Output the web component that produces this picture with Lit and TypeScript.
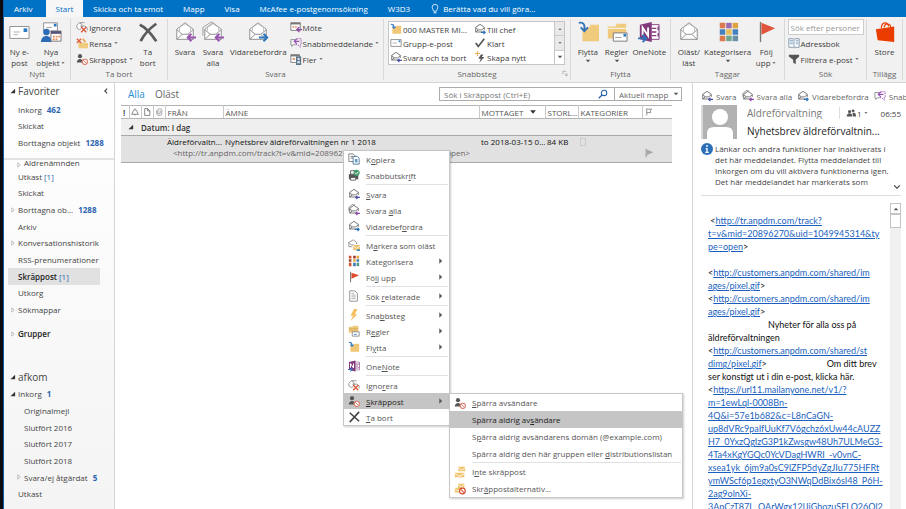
import { LitElement, html, css, svg, nothing } from "lit";
import { customElement } from "lit/decorators.js";
import { classMap } from "lit/directives/class-map.js";

const envelope = svg`<path d="M3 9 12 2l9 7v11H3z" fill="#fff" stroke="#8a8a8a"/><path d="M6 11V7l6-4 6 4v4" fill="#fff" stroke="#a5a5a5" stroke-width=".7"/><path d="M3 9.500l6 5h6l6-5M3 20l6-5.500M21 20l-6-5.500" fill="none" stroke="#8a8a8a"/>`;
const smallEnvelope = svg`<path d="M11 10.500H2V5l5-3.500L12 5v3" fill="#fff" stroke="#666"/><path d="M2 5.500 5 8h4l3-2.500M2 10.500 5 8" fill="none" stroke="#666"/>`;
const block = svg`<circle cx="11" cy="11" r="3.300" fill="#fff" stroke="#dd7a68" stroke-width="1.300"/><path d="m9 9 4 4" stroke="#dd7a68" stroke-width="1.200"/>`;
const person = svg`<circle cx="5" cy="4" r="2.600" fill="#555"/><path d="M1 12c0-6 8-6 8 0z" fill="#555"/>`;

const icons: Record<string, [string, unknown]> = {
  newMail: ["0 0 24 24", svg`<path d="M2 6h21v13H2z" fill="#fff" stroke="#8a8a8a"/><path d="M6 12h7M6 15h5" stroke="#a9a9a9"/><path d="M17 8h4v4h-4z" fill="#2b78c5"/>`],
  newItems: ["0 0 24 24", svg`<path d="M4 2h15v9H4z" fill="#fff" stroke="#8a8a8a"/><path d="M7 7h6" stroke="#999"/><path d="M15 3h3v3h-3z" fill="#2b78c5"/><circle cx="7" cy="12" r="3.500" fill="#2b6cb5"/><path d="M1 23c0-9 12-9 12 0z" fill="#2b6cb5"/><path d="M12 11h11v11H12z" fill="#fff" stroke="#777"/><path d="M12 11h11v3H12z" fill="#557"/><path d="M14 16h2v2h-2zm3 0h2v2h-2zm3 0h2v2h-2zm-6 3h2v2h-2zm3 0h2v2h-2z" fill="#e88b55"/>`],
  ignore: ["0 0 14 14", svg`<path d="M10 2H4L1 5v3l3 2 2-1M4 2l3 2v4M5 6h5l3 2v3" fill="#fff" stroke="#8a8a8a"/><path d="m6 7 6 6m0-6-6 6" stroke="#e05a3c" stroke-width="1.600"/>`],
  clean: ["0 0 14 14", svg`<path d="M3 6h4l1 1h6v6H3z" fill="#f0ca7d"/><path d="m1 2 5 5m0-5L1 7" stroke="#e0613f" stroke-width="1.600"/><path d="M8 2l3 4" stroke="#e7a34f" stroke-width="2"/>`],
  junk: ["0 0 15 15", svg`${person}${block}`],
  deleteBig: ["0 0 24 24", svg`<path d="M3 4C10 7 15 13 21 22M21 3C14 8 8 14 4 22" fill="none" stroke="#5b5b5b" stroke-width="3"/>`],
  reply: ["0 0 24 24", svg`${envelope}<path d="M24 18h-9m4-4-4 4 4 4" fill="none" stroke="#9a55b4" stroke-width="2.200"/>`],
  replyAll: ["0 0 24 24", svg`<path d="M1 16V7l9-6 3 2" fill="none" stroke="#9a9a9a"/>${envelope}<path d="M24 18h-9m4-4-4 4 4 4" fill="none" stroke="#9a55b4" stroke-width="2.200"/>`],
  forward: ["0 0 24 24", svg`${envelope}<path d="M13 18h9m-4-4 4 4-4 4" fill="none" stroke="#2f74bd" stroke-width="2.200"/>`],
  unread: ["0 0 24 24", envelope],
  meeting: ["0 0 14 14", svg`<path d="M1 2h11v9H1z" fill="#fff" stroke="#777"/><path d="M1 2h11v2H1z" fill="#777"/><path d="M3 6h2v2H3zm3 0h2v2H6z" fill="#e28a60"/><path d="M14 10H8m3-3-3 3 3 3" fill="none" stroke="#8d4aa7" stroke-width="1.500"/>`],
  im: ["0 0 14 14", svg`<path d="M6 9H4l-2 2V9H1V3h5" fill="none" stroke="#888"/><path d="M8 2h5v7h-1v3L9 9H6" fill="none" stroke="#9a55b4" stroke-dasharray="2 1"/><path d="M11 5H6m2-3L5 5l3 3" fill="none" stroke="#9a55b4" stroke-width="1.400"/>`],
  more: ["0 0 14 14", svg`<path d="M1 2h10v9H1z" fill="#fff" stroke="#777"/><path d="M1 2h10v2H1z" fill="#777"/><path d="M3 6h3v2H3z" fill="#e28a60"/><path d="M7 4h6v10H7z" fill="#5c7388"/><circle cx="10" cy="7" r="1.500" fill="#cfe0ee"/><path d="M8 12c0-4 4-4 4 0z" fill="#cfe0ee"/>`],
  moveFolder: ["0 0 15 14", svg`<path d="M3 5h4l1-2h6v10H3z" fill="#f0c777"/><path d="M1 1c3 0 4 1 4 4M3 4l2 2 2-2" fill="none" stroke="#2f74bd" stroke-width="1.300"/>`],
  mail: ["0 0 14 14", svg`<path d="M1 3h12v8H1z" fill="#fff" stroke="#888"/><path d="M3 7h5" stroke="#aaa"/><path d="M10 4h2v2h-2z" fill="#2b78c5"/>`],
  replyS: ["0 0 14 14", svg`${smallEnvelope}<path d="M14 11H9m2-2-2 2 2 2" fill="none" stroke="#4b51a5" stroke-width="1.400"/>`],
  replyAllS: ["0 0 14 14", svg`<path d="M1 8V4l5-4 2 1" fill="none" stroke="#888"/>${smallEnvelope}<path d="M14 11H9m2-2-2 2 2 2" fill="none" stroke="#8d4aa7" stroke-width="1.400"/>`],
  forwardS: ["0 0 14 14", svg`${smallEnvelope}<path d="M8 11h5m-2-2 2 2-2 2" fill="none" stroke="#2f74bd" stroke-width="1.400"/>`],
  check: ["0 0 14 14", svg`<path d="m2 7 3 4 7-9" fill="none" stroke="#555" stroke-width="2"/>`],
  newStep: ["0 0 14 14", svg`<path d="M8 4 5 9h3l-2 5 6-7H9l2-3z" fill="#555"/><path d="M4 0v6M1 3h6" stroke="#e7b25a" stroke-width="1.200"/>`],
  move: ["0 0 24 24", svg`<path d="M6 7h7l2-3h9v18H6z" fill="#f0ca7d"/><path d="M2 2c6-1 7 3 6 9M4 7l4 4 4-4" fill="none" stroke="#2f74bd" stroke-width="2"/>`],
  rules: ["0 0 24 24", svg`<path d="M2 6h8l2-3h10v16H2z" fill="#f0ca7d"/><path d="M2 8h20" stroke="#fff"/><path d="M8 13h15v9H8z" fill="#fff" stroke="#777"/><path d="M10 18h7" stroke="#999"/><path d="M19 14h3v3h-3z" fill="#2b78c5"/>`],
  onenote: ["0 0 24 24", svg`<path d="M13 4h10v16H13z" fill="#fff" stroke="#80397b"/><path d="M15 8h5M15 12h5M15 16h5M22 6v4M22 13v4" stroke="#80397b" stroke-width="1.500"/><path d="M2 4l13-3v22L2 20z" fill="#80397b"/><path d="M5 16V7l6 9V7" fill="none" stroke="#fff" stroke-width="2"/><path d="M0 19h8m-3-4 4 4-4 4" fill="none" stroke="#2f74bd" stroke-width="2"/>`],
  categorize: ["0 0 24 24", svg`<path d="M3 2h6v6H3zM3 16h6v6H3z" fill="#db7a4e"/><path d="M10 2h6v6h-6z" fill="#9a6bae"/><path d="M17 2h6v6h-6z" fill="#e0a23f"/><path d="M3 9h6v6H3z" fill="#4581bd"/><path d="M10 9h6v6h-6z" fill="#e8bf55"/><path d="M17 9h6v6h-6z" fill="#4581bd"/><path d="M10 16h6v6h-6z" fill="#6fa68c"/><path d="M17 16h6v6h-6z" fill="#6c8fa8"/>`],
  flagBig: ["0 0 24 24", svg`<path d="M6 1v22" stroke="#777" stroke-width="1.500"/><path d="M7 2l15 6-15 7z" fill="#e0553a"/>`],
  book: ["0 0 14 14", svg`<path d="M1 2h5l1 1 1-1h5v10H8l-1 1-1-1H1zM7 3v9" fill="#fff" stroke="#7d8fa3"/><path d="M2 4h4M2 6h4M2 8h4M9 4h3M9 6h3M9 8h3" stroke="#7da5c9"/>`],
  filter: ["0 0 14 14", svg`<path d="M1 2h12v2L9 8v5l-3-2V8L1 4z" fill="#555"/>`],
  store: ["0 0 24 24", svg`<path d="M2 9l20-3v17L4 21z" fill="#eb3c00"/><path d="M8 8c0-7 7-8 8-2M11 7c1-6 8-4 7 0" fill="none" stroke="#eb3c00" stroke-width="1.300"/>`],
  bulb: ["0 0 14 14", svg`<path d="M5 10c0-2-2-3-2-5.500a4 4 0 0 1 8 0C11 7 9 8 9 10zM5 12h4M6 14h2" fill="none" stroke="#fff" stroke-width="1.100"/>`],
  search: ["0 0 14 14", svg`<circle cx="8.500" cy="5.500" r="3.800" fill="none" stroke="#2a64a8" stroke-width="1.500"/><path d="m6 8-5 5" stroke="#2a64a8" stroke-width="1.800"/>`],
  bell: ["0 0 14 14", svg`<path d="M1 11c3-2 1-8 6-8s3 6 6 8zM6 12h2M7 1v2" fill="none" stroke="#555" stroke-width="1.200"/>`],
  doc: ["0 0 14 14", svg`<path d="M3 1h5l4 4v8H3zM8 1v4h4" fill="none" stroke="#555" stroke-width="1.200"/>`],
  clip: ["0 0 14 14", svg`<path d="M9 4v5c0 2-4 2-4 0V4c0-4 7-4 7 0v5c0 6-9 6-9 0V4" fill="none" stroke="#777" stroke-width="1.200"/>`],
  flagLine: ["0 0 14 14", svg`<path d="M3 1v12M3 2h9L9 5l1 3H3" fill="none" stroke="#666" stroke-width="1.200"/>`],
  flagGray: ["0 0 14 14", svg`<path d="M3 1v12" stroke="#999" stroke-width="1.500"/><path d="M4 2l9 4-9 4z" fill="#a8a8a8"/>`],
  flag: ["0 0 14 14", svg`<path d="M3 1v12" stroke="#777" stroke-width="1.200"/><path d="M4 2l9 3-9 4z" fill="#dc4a2c"/>`],
  copy: ["0 0 14 14", svg`<path d="M1 1h5l2 2v7H1zM3 4h3M3 6h3" fill="#fff" stroke="#777"/><path d="M6 4h5l2 2v7H6z" fill="#fff" stroke="#4b6f95"/><path d="M8 7h3v4H8z" fill="#5d9bcd"/>`],
  print: ["0 0 14 14", svg`<path d="M1 6h11v6H1z" fill="#555"/><path d="M3 2h5v4H3zM3 10h6v3H3z" fill="#fff" stroke="#555"/><circle cx="10" cy="4.500" r="3.600" fill="#3f9a6b"/><path d="m8 4 2 2 2-3" fill="none" stroke="#fff"/>`],
  markUnread: ["0 0 14 14", svg`<path d="M10 6V4L6 1 1 4v5h4M1 4l3 3h3" fill="#fff" stroke="#888"/><path d="M6 7h8v6H6z" fill="#f0c36b"/><path d="m6 8 4 3 4-3" fill="none" stroke="#fff"/><path d="M10 12h4v2h-4z" fill="#4a90c2"/>`],
  catS: ["0 0 14 14", svg`<path d="M1 1h3v3H1zM1 9h3v4H1z" fill="#d0532e"/><path d="M6 1h3v3H6zM1 5h3v3H1z" fill="#9d3e2a"/><path d="M10 1h3v3h-3zM6 5h3v3H6z" fill="#e5a43c"/><path d="M10 5h3v3h-3zM6 9h3v4H6z" fill="#3b79b8"/><path d="M10 9h3v4h-3z" fill="#4c9a83"/>`],
  related: ["0 0 14 14", svg`<path d="M2 1h6l3 3v9H2z" fill="#fff" stroke="#888"/><path d="M4 4h3M4 6h5M4 8h5M4 10h5" stroke="#aaa"/>`],
  bolt: ["0 0 14 14", svg`<path d="M7 0 3 8h3l-3 6 8-8H8l3-6z" fill="#f5bd5b"/>`],
  rulesS: ["0 0 14 14", svg`<path d="M1 2h4l1-1h6v8H1z" fill="#f0ca7d"/><path d="M1 4h11M1 6h11" stroke="#c99b45" stroke-width=".6"/><path d="M5 8h8v5H5z" fill="#fff" stroke="#888"/><path d="M7 11h3" stroke="#2b78c5"/>`],
  deleteS: ["0 0 14 14", svg`<path d="m2 2 11 10M13 1 2 13" fill="none" stroke="#444" stroke-width="1.800"/>`],
  notJunk: ["0 0 14 14", svg`<path d="M5 1h8v5H5zM1 8h11v5H1z" fill="#f0c36b"/><path d="M5 2l4 3 4-3M1 9l5 3 6-3" fill="none" stroke="#fff"/>`],
  junkOptions: ["0 0 15 15", svg`<path d="M5 1h8v5H5zM1 6h9v6H1z" fill="#f0c36b"/><path d="M5 2l4 3 4-3M1 7l4 3 4-3" fill="none" stroke="#fff"/><circle cx="10.500" cy="10" r="3.600" fill="#fff" stroke="#d9482f" stroke-width="1.400"/><path d="m8.500 8 4 4" stroke="#d9482f" stroke-width="1.300"/>`],
  avatar: ["0 0 36 34", svg`<path d="M0 0h36v34H0z" fill="#b1b1b1"/><circle cx="19" cy="12" r="8" fill="#fff"/><path d="M6 34V28q0-6 7-6h12q7 0 7 6v6z" fill="#fff"/><path d="M1 0v34" stroke="#fff"/>`],
  people: ["0 0 14 14", svg`<circle cx="5" cy="5" r="2.200" fill="#555"/><path d="M1 12c0-6 8-6 8 0z" fill="#555"/><circle cx="10" cy="4" r="2" fill="#555"/><path d="M9 7c4-1 5 1 5 5h-4z" fill="#555"/>`],
  info: ["0 0 14 14", svg`<circle cx="7" cy="7" r="7" fill="#2b6fb8"/><path d="M7 6v5M5 11h4M5.500 6.500H7" stroke="#fff" stroke-width="1.600"/><circle cx="7" cy="3.500" r="1.100" fill="#fff"/>`],
  chevron: ["0 0 14 14", svg`<path d="m2 4 5 5 5-5" fill="none" stroke="#444" stroke-width="2"/>`],
  collapse: ["0 0 14 14", svg`<path d="m9 3-4 4 4 4" fill="none" stroke="#444" stroke-width="2"/>`],
  launcher: ["0 0 14 14", svg`<path d="M2 10V3h8M6 7l5 5M12 8v5H7" fill="none" stroke="#888" stroke-width="1.300"/>`],
  open: ["0 0 14 14", svg`<path d="M12 2v10H1z" fill="#333"/>`],
  closed: ["0 0 14 14", svg`<path d="M4 2v10l6-5z" fill="none" stroke="#999" stroke-width="1.300"/>`],
  right: ["0 0 14 14", svg`<path d="M4 2v10l5-5z" fill="#555"/>`],
  down: ["0 0 14 14", svg`<path d="M3 5h8l-4 4z" fill="#555"/>`],
  up: ["0 0 14 14", svg`<path d="M3 9h8L7 5z" fill="#555"/>`],
  sort: ["0 0 14 14", svg`<path d="M2 4h10l-5 6z" fill="#333"/>`],
};

const icon = (name: string, size = "s12") =>
  html`<svg class="icon ${size}" viewBox=${icons[name][0]} aria-hidden="true">${icons[name][1]}</svg>`;

type Folder = { name: string; count?: string; draft?: string; arrow?: "open" | "closed"; level?: number; head?: boolean; strong?: boolean; selected?: boolean };

const favorites: Folder[] = [
  { name: "Inkorg", count: "462" },
  { name: "Skickat" },
  { name: "Borttagna objekt", count: "1288" },
];
const folders: Folder[] = [
  { name: "Äldrenämnden", arrow: "closed", level: 1 },
  { name: "Utkast", draft: "[1]" },
  { name: "Skickat" },
  { name: "Borttagna ob...", count: "1288", arrow: "closed" },
  { name: "Arkiv" },
  { name: "Konversationshistorik", arrow: "closed" },
  { name: "RSS-prenumerationer" },
  { name: "Skräppost", draft: "[1]", strong: true, selected: true },
  { name: "Utkorg" },
  { name: "Sökmappar", arrow: "closed" },
];
const shared: Folder[] = [
  { name: "afkom", arrow: "open", head: true },
  { name: "Inkorg", count: "1", arrow: "open" },
  { name: "Originalmejl", level: 1 },
  { name: "Slutfört 2016", level: 1 },
  { name: "Slutfört 2017", level: 1 },
  { name: "Slutfört 2018", level: 1 },
  { name: "Svara/ej åtgärdat", count: "5", arrow: "closed", level: 1 },
  { name: "Utkast" },
  { name: "Skickat" },
];

/* An underscore marks the access key that follows it; "-" is a divider. */
type Item = { icon?: string; text: string; sub?: boolean; active?: boolean };
const divider: Item = { text: "-" };
const menu: Item[] = [
  { icon: "copy", text: "K_opiera" },
  { icon: "print", text: "Snabbutskr_ift" },
  divider,
  { icon: "replyS", text: "_Svara" },
  { icon: "replyAllS", text: "Svara _alla" },
  { icon: "forwardS", text: "Vidarebef_ordra" },
  divider,
  { icon: "markUnread", text: "M_arkera som oläst" },
  { icon: "catS", text: "Kate_gorisera", sub: true },
  { icon: "flag", text: "Fö_lj upp", sub: true },
  divider,
  { icon: "related", text: "Sök _relaterade", sub: true },
  divider,
  { icon: "bolt", text: "Sna_bbsteg", sub: true },
  { icon: "rulesS", text: "R_egler", sub: true },
  { icon: "moveFolder", text: "Fl_ytta", sub: true },
  divider,
  { icon: "onenote", text: "One_Note" },
  divider,
  { icon: "ignore", text: "Igno_rera" },
  { icon: "junk", text: "_Skräppost", sub: true, active: true },
  { icon: "deleteS", text: "_Ta bort" },
];
const submenu: Item[] = [
  { icon: "junk", text: "_Spärra avsändare" },
  { text: "Spärra aldrig av_sändare", active: true },
  { text: "S_pärra aldrig avsändarens domän (@example.com)" },
  { text: "Spärra aldrig den här gruppen eller _distributionslistan" },
  divider,
  { icon: "notJunk", text: "I_nte skräppost" },
  { icon: "junkOptions", text: "Skr_äppostalternativ..." },
];

/* One entry per line of the message: text before the link, the link, text after it. */
const body: [string, string?, string?][] = [
  [" <", "http://tr.anpdm.com/track?"],
  ["", "t=v&mid=20896270&uid=1049945314&ty"],
  ["", "pe=open", ">"],
  [" "],
  ["<", "http://customers.anpdm.com/shared/im"],
  ["", "ages/pixel.gif", ">"],
  ["<", "http://customers.anpdm.com/shared/im"],
  ["", "ages/pixel.gif", ">"],
  [" ".repeat(26) + "Nyheter för alla oss på"],
  ["äldreförvaltningen"],
  ["<", "http://customers.anpdm.com/shared/st"],
  ["", "dimg/pixel.gif", ">" + " ".repeat(26) + "Om ditt brev"],
  ["ser konstigt ut i din e-post, klicka här."],
  ["<", "https://url11.mailanyone.net/v1/?"],
  ["", "m=1ewLql-0008Bn-"],
  ["", "4Q&i=57e1b682&c=L8nCaGN-"],
  ["", "up8dVRc9paIfUuKf7V6gchz6xUw44cAUZZ"],
  ["", "H7_0YxzQgIzG3P1kZwsgw48Uh7ULMeG3-"],
  ["", "4Ta4xKgYGQc0YcVDagHWRI_-v0vnC-"],
  ["", "xsea1yk_6jm9a0sC9lZFP5dyZgJIu775HFRt"],
  ["", "ymWScf6p1egxtyO3NWqDdBix6sI48_P6H-"],
  ["", "2ag9olnXi-"],
  ["", "3ApCzT87L_QArWgx12lJiGhozuSELO26Ql2"],
];

@customElement("app-root")
export class AppRoot extends LitElement {
  static styles = css`
    :host {
      display: flex;
      position: relative;
      height: 100vh;
      overflow: hidden;
      background: #fff;
      color: #444;
      font: 8px/11px "Open Sans", "Noto Sans", sans-serif;
    }
    * { box-sizing: border-box; }
    button, input, select {
      font: inherit;
      color: inherit;
      background: none;
      border: 0;
      padding: 0;
      margin: 0;
      border-radius: 0;
      outline: 0;
    }
    button { white-space: nowrap; display: flex; align-items: center; }
    .icon { display: block; flex: none; }
    .s6 { width: 6px; height: 6px; }
    .s8 { width: 8px; height: 8px; }
    .s10 { width: 10px; height: 10px; }
    .s12 { width: 12px; height: 12px; }
    .s22 { width: 22px; height: 22px; }
    .edge { flex: none; width: 4px; background: #0b0b10; border-right: 1px solid #0b5fa8; }
    .window { flex: 1; min-width: 0; display: flex; flex-direction: column; }

    .tabs { flex: none; height: 17px; display: flex; background: #0072c6; color: #fff; }
    .tab { padding: 0 10px; }
    .tab:first-child { padding-right: 13px; }
    .tab.current { background: #f6f6f6; color: #0072c6; }
    .tell { gap: 3px; }

    .ribbon { flex: none; display: flex; height: 66px; background: #f1f1f1; border-bottom: 1px solid #d5d5d5; color: #3c3c3c; overflow: hidden; }
    .group { flex: none; display: flex; flex-direction: column; border-right: 1px solid #d8d8d8; margin: 2px 0; }
    .g-new { width: 67px; }
    .g-delete { width: 97px; }
    .g-reply { width: 216px; }
    .g-quick { width: 187px; }
    .g-move { width: 100px; }
    .g-tags { width: 114px; }
    .g-find { width: 82px; }
    .g-store { width: 36px; }
    .tools { flex: 1; min-height: 0; display: flex; justify-content: center; }
    .title { position: relative; flex: none; color: #666; text-align: center; height: 12px; }
    .launch { position: absolute; right: 2px; top: 2px; }
    .big { flex-direction: column; text-align: center; justify-content: flex-start; padding: 2px 3px 0; white-space: pre; }
    .tight { padding: 2px 1px 0; }
    .big span { display: flex; flex-direction: column; align-items: center; padding-top: 3px; }
    .big .row { flex-direction: row; padding: 0; }
    .col { display: flex; flex-direction: column; }
    .small { height: 16px; gap: 1px; }
    .steps { flex: 1; display: flex; margin: 2px 5px 0 4px; height: 44px; background: #fff; border: 1px solid #c6c6c6; }
    .steps .grid { flex: 1; display: grid; grid-template-columns: 84px 1fr; grid-auto-rows: 14px; }
    .steps .small { height: 14px; padding-left: 1px; }
    .spin { display: flex; flex-direction: column; width: 10px; border-left: 1px solid #c6c6c6; }
    .spin button { flex: 1; justify-content: center; background: #e9e9e9; border-bottom: 1px solid #ccc; }
    .spin button:last-child { background: #fff; border: 0; }
    .person { width: 76px; height: 16px; border: 1px solid #ccc; background: #fff; padding: 0 2px; }
    input::placeholder { color: #999; opacity: 1; }

    .main { flex: 1; min-height: 0; display: flex; }
    .nav { flex: none; width: 111px; border-right: 1px solid #d4d4d4; background: linear-gradient(#fff, #f4f4f4); overflow: hidden; }
    .navhead { display: flex; align-items: center; justify-content: space-between; height: 16px; padding-right: 4px; }
    .list { list-style: none; margin: 0; padding: 0; display: grid; grid-auto-rows: 1fr; }
    .fav { height: 50px; margin: 2px 0 7px; }
    .all { height: 160px; grid-template-rows: 8px; border-top: 2px solid #e2e2e2; }
    .all .folder:first-child { align-items: flex-end; overflow: hidden; }
    .groups { height: 17px; margin: 7px 0 27px; }
    .shared { height: 150px; }
    .folder { display: flex; align-items: center; min-height: 0; margin: 0 14px 0 4px; padding: 0; color: #444; white-space: nowrap; }
    .folder .mark { width: 10px; flex: none; display: flex; justify-content: center; }
    .folder.level { margin-left: 10px; }
    .head { font-size: 10px; }
    .navhead .head { margin-right: 0; }
    .strong { font-weight: 600; color: #222; }
    .selected { background: #e1e1e1; }
    .count { color: #2a64b0; font-weight: 700; margin-left: 5px; }
    .draft { color: #2a64b0; margin-left: 2px; font-weight: 400; }

    .mail { flex: 1; min-width: 0; border-right: 1px solid #d4d4d4; padding: 3px 20px 0 6px; }
    .bar { display: flex; align-items: center; height: 16px; margin-right: -10px; }
    .scope { font-size: 10px; padding: 0 5px; color: #666; }
    .scope.on { color: #2a8dd4; padding-left: 7px; }
    .search { margin-left: auto; display: flex; align-items: center; width: 243px; height: 14px; border: 1px solid #ababab; color: #666; }
    .search input { flex: 1; min-width: 0; height: 100%; padding: 0 4px; }
    .search input::placeholder { color: #777; }
    .pick { display: flex; align-items: center; height: 100%; margin-left: 6px; border-left: 1px solid #ababab; padding-right: 1px; }
    .pick select { appearance: none; width: 57px; padding-left: 4px; }
    table { width: 100%; margin-top: 3px; border-collapse: collapse; table-layout: fixed; white-space: nowrap; color: #333; }
    th { height: 13px; padding: 0 2px; font-weight: 400; text-align: left; border-top: 1px solid #b4b4b4; border-bottom: 1px solid #b4b4b4; border-right: 1px solid #c9c9c9; overflow: hidden; color: #555; }
    th:last-child { border-right: 0; }
    .c-mark { width: 8px; } .c-icon { width: 12px; } .c-from { width: 58px; } .c-date { width: 66px; }
    .c-size { width: 33px; } .c-cat { width: 64px; } .c-flag { width: 30px; }
    .tight-th { padding: 0 1px; }
    .sorted { display: flex; align-items: center; justify-content: space-between; padding-right: 6px; }
    td { padding: 0 2px; overflow: hidden; }
    .day td { height: 17px; background: #efefef; font-weight: 600; border-bottom: 1px solid #a8a8a8; }
    .day span { display: flex; align-items: center; gap: 7px; padding-left: 5px; }
    .msg { background: #e1e1e1; color: #111; }
    .msg td { height: 12px; font-weight: 500; border-top: 1px solid #a8a8a8; }
    .msg.low td { height: 15px; font-weight: 400; color: #666; border: 0; border-bottom: 1px solid #a8a8a8; line-height: 10px; vertical-align: top; }
    .msg.low .preview { padding-left: 8px; }
    .box { width: 6px; height: 8px; border: 1px solid #ccc; }

    .read { flex: none; width: 213px; padding: 5px 5px 0 8px; display: flex; flex-direction: column; overflow: hidden; }
    .actions { display: flex; gap: 5px; height: 16px; margin-right: -5px; overflow: hidden; flex: none; color: #666; }
    .actions button { gap: 3px; flex: none; }
    .sender { display: flex; gap: 10px; height: 36px; flex: none; align-items: center; }
    .portrait { width: 36px; height: 34px; }
    .who { flex: 1; min-width: 0; }
    .who div { display: flex; align-items: center; height: 18px; }
    .name { flex: 1; font-size: 10px; color: #777; overflow: hidden; white-space: nowrap; }
    .subject { margin: 0; font-size: 10px; line-height: 18px; font-weight: 500; color: #222; white-space: nowrap; }
    .people { gap: 1px; border-left: 1px solid #ddd; padding-left: 6px; height: 12px; }
    .time { margin-left: 12px; }
    .info { display: flex; gap: 2px; flex: none; height: 53px; border-bottom: 1px solid #ddd; margin-top: 3px; }
    .info p { margin: 0; flex: 1; white-space: pre; }
    .info .chev { align-self: flex-end; padding-bottom: 4px; }
    .content { flex: 1; min-height: 0; display: flex; padding-top: 7px; }
    .text { flex: 1; min-width: 0; margin: 0; padding: 11px 0 0 7px; font: 9px/13px Lato, sans-serif; color: #111; white-space: pre; overflow: hidden; }
    .text a { color: #1a5fc0; }
    .scroll { width: 11px; background: #f0f0f0; }
    .scroll button { width: 11px; height: 11px; justify-content: center; background: #fff; border: 1px solid #c4c4c4; }
    .thumb { height: 14px; background: #fff; border: 1px solid #c4c4c4; }

    .menu { position: absolute; background: #fff; border: 1px solid #c6c6c6; box-shadow: 1px 1px 2px #0003; display: flex; flex-direction: column; }
    .context { left: 343px; top: 150px; width: 107px; }
    .sub { left: 449px; top: 393px; width: 234px; }
    .item { height: 16px; padding: 0 4px; color: #555; }
    .sub .item { height: 17px; }
    .item .slot { width: 18px; flex: none; }
    .item .label { flex: 1; text-align: left; }
    .item.active { background: #c5c5c5; color: #222; }
    .line { height: 1px; margin: 1px 1px 1px 22px; background: #e1e1e1; flex: none; }
    .sub .line { margin: 0 1px 0 22px; }
  `;

  private big(name: string, lines: string[], arrow = false, tight = false) {
    const last = lines.length - 1;
    return html`<button class=${classMap({ big: true, tight })}>
      ${icon(name, "s22")}
      <span>${lines.map((l, i) => html`<span class="row">${l}${arrow && i === last && last ? icon("down", "s6") : nothing}</span>`)}
      ${arrow && !last ? icon("down", "s8") : nothing}</span>
    </button>`;
  }

  private small(name: string, text: string, arrow = false) {
    return html`<button class="small">${icon(name)}${text}${arrow ? icon("down", "s6") : nothing}</button>`;
  }

  private group(kind: string, title: string, content: unknown, launch = false) {
    return html`<section class="group ${kind}">
      <div class="tools">${content}</div>
      <div class="title">${title}${launch ? html`<button class="launch" aria-label="Visa ${title}">${icon("launcher", "s6")}</button>` : nothing}</div>
    </section>`;
  }

  private folder(f: Folder) {
    return html`<li class=${classMap({ folder: true, level: !!f.level, head: !!f.head, strong: !!f.strong, selected: !!f.selected })}>
      <span class="mark">${f.arrow ? icon(f.arrow, "s6") : nothing}</span>${f.name}
      ${f.count ? html`<span class="count">${f.count}</span>` : nothing}
      ${f.draft ? html`<span class="draft">${f.draft}</span>` : nothing}
    </li>`;
  }

  private item(i: Item) {
    if (i.text === "-") return html`<div class="line" role="separator"></div>`;
    const [before, rest] = i.text.split("_");
    return html`<button role="menuitem" class=${classMap({ item: true, active: !!i.active })}>
      <span class="slot">${i.icon ? icon(i.icon) : nothing}</span>
      <span class="label">${before}<u>${rest[0]}</u>${rest.slice(1)}</span>
      ${i.sub ? icon("right", "s8") : nothing}
    </button>`;
  }

  render() {
    return html`
      <div class="edge"></div>
      <div class="window">
        <nav class="tabs">
          ${["Arkiv", "Start", "Skicka och ta emot", "Mapp", "Visa", "McAfee e-postgenomsökning", "W3D3"].map(
            (t) => html`<button class=${classMap({ tab: true, current: t === "Start" })}>${t}</button>`
          )}
          <button class="tab tell">${icon("bulb", "s10")}Berätta vad du vill göra...</button>
        </nav>
        <div class="ribbon">
          ${this.group("g-new", "Nytt", html`${this.big("newMail", ["Ny e-", "post"])}${this.big("newItems", ["Nya", "objekt"], true)}`)}
          ${this.group("g-delete", "Ta bort", html`<div class="col">${this.small("ignore", "Ignorera")}${this.small("clean", "Rensa", true)}${this.small("junk", "Skräppost", true)}</div>${this.big("deleteBig", ["Ta", "bort"])}`)}
          ${this.group("g-reply", "Svara", html`${this.big("reply", ["Svara"])}${this.big("replyAll", ["Svara", "alla"])}${this.big("forward", ["Vidarebefordra"])}
            <div class="col">${this.small("meeting", "Möte")}${this.small("im", "Snabbmeddelande", true)}${this.small("more", "Fler", true)}</div>`)}
          ${this.group("g-quick", "Snabbsteg", html`<div class="steps">
              <div class="grid">
                ${this.small("moveFolder", "000 MASTER MI...")}${this.small("forwardS", "Till chef")}
                ${this.small("mail", "Grupp-e-post")}${this.small("check", "Klart")}
                ${this.small("replyS", "Svara och ta bort")}${this.small("newStep", "Skapa nytt")}
              </div>
              <div class="spin"><button aria-label="Upp">${icon("up", "s6")}</button><button aria-label="Ned">${icon("down", "s6")}</button><button aria-label="Mer">${icon("down", "s8")}</button></div>
            </div>`, true)}
          ${this.group("g-move", "Flytta", html`${this.big("move", ["Flytta"], true)}${this.big("rules", ["Regler"], true)}${this.big("onenote", ["OneNote"], false, true)}`)}
          ${this.group("g-tags", "Taggar", html`${this.big("unread", ["Oläst/", "läst"])}${this.big("categorize", ["Kategorisera"], true, true)}${this.big("flagBig", ["Följ", "upp"], true)}`)}
          ${this.group("g-find", "Sök", html`<div class="col"><input class="person" aria-label="Sök efter personer" placeholder="Sök efter personer" />${this.small("book", "Adressbok")}${this.small("filter", "Filtrera e-post", true)}</div>`)}
          ${this.group("g-store", "Tillägg", this.big("store", ["Store"]))}
        </div>
        <div class="main">
          <nav class="nav">
            <div class="navhead"><div class="folder head"><span class="mark">${icon("open", "s6")}</span>Favoriter</div><button aria-label="Minimera">${icon("collapse", "s8")}</button></div>
            <ul class="list fav">${favorites.map((f) => this.folder(f))}</ul>
            <ul class="list all">${folders.map((f) => this.folder(f))}</ul>
            <ul class="list groups">${this.folder({ name: "Grupper", arrow: "closed", strong: true })}</ul>
            <ul class="list shared">${shared.map((f) => this.folder(f))}</ul>
          </nav>
          <main class="mail">
            <div class="bar">
              <button class="scope on">Alla</button><button class="scope">Oläst</button>
              <div class="search">
                <input aria-label="Sök i Skräppost" placeholder="Sök i Skräppost (Ctrl+E)" />${icon("search", "s10")}
                <div class="pick"><select aria-label="Sökomfång"><option>Aktuell mapp</option></select>${icon("down", "s8")}</div>
              </div>
            </div>
            <table>
              <colgroup><col class="c-mark" /><col class="c-icon" /><col class="c-icon" /><col class="c-icon" /><col class="c-from" /><col /><col class="c-date" /><col class="c-size" /><col class="c-cat" /><col class="c-flag" /></colgroup>
              <thead><tr>
                <th><b>!</b></th><th class="tight-th">${icon("bell", "s8")}</th><th class="tight-th">${icon("doc", "s8")}</th><th class="tight-th">${icon("clip", "s8")}</th>
                <th>FRÅN</th><th>ÄMNE</th><th><span class="sorted">MOTTAGET${icon("sort", "s8")}</span></th><th>STORL...</th><th>KATEGORIER</th><th>${icon("flagLine", "s8")}</th>
              </tr></thead>
              <tbody>
                <tr class="day"><td colspan="10"><span>${icon("open", "s6")}Datum: I dag</span></td></tr>
                <tr class="msg"><td colspan="4"></td><td>Äldreförvaltn...</td><td>Nyhetsbrev äldreförvaltningen nr 1 2018</td><td>to 2018-03-15 0...</td><td>84 KB</td><td><div class="box"></div></td><td></td></tr>
                <tr class="msg low"><td colspan="4"></td><td class="preview" colspan="5">&lt;http://tr.anpdm.com/track?t=v&amp;mid=20896270&amp;uid=1049945314&amp;type=open&gt;</td><td>${icon("flagGray", "s10")}</td></tr>
              </tbody>
            </table>
          </main>
          <aside class="read">
            <div class="actions">
              <button>${icon("replyS")}Svara</button><button>${icon("replyAllS")}Svara alla</button><button>${icon("forwardS")}Vidarebefordra</button><button>${icon("im")}Snabbmeddelande</button>
            </div>
            <div class="sender">
              ${icon("avatar", "portrait")}
              <div class="who">
                <div><span class="name">Äldreförvaltning</span><button class="people">${icon("people", "s10")}1${icon("down", "s6")}</button><span class="time">06:55</span></div>
                <h2 class="subject">Nyhetsbrev äldreförvaltnin...</h2>
              </div>
            </div>
            <div class="info">
              ${icon("info")}
              <p>${"Länkar och andra funktioner har inaktiverats i\ndet här meddelandet. Flytta meddelandet till\nInkorgen om du vill aktivera funktionerna igen.\nDet här meddelandet har markerats som"}</p>
              <button class="chev" aria-label="Visa mer">${icon("chevron", "s8")}</button>
            </div>
            <div class="content">
              <div class="text">${body.map(([before, link, after]) => html`<div>${before}${link ? html`<a href="#">${link}</a>` : nothing}${after ?? nothing}</div>`)}</div>
              <div class="scroll"><button aria-label="Rulla upp">${icon("up", "s8")}</button><div class="thumb"></div></div>
            </div>
          </aside>
        </div>
      </div>
      <div class="menu context" role="menu">${menu.map((i) => this.item(i))}</div>
      <div class="menu sub" role="menu">${submenu.map((i) => this.item(i))}</div>
    `;
  }
}
